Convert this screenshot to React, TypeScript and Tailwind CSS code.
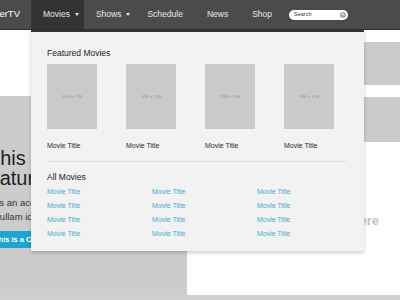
import React from "react";

const navTabs = [
  { label: "Movies", caret: true, active: true },
  { label: "Shows", caret: true, active: false },
  { label: "Schedule", caret: false, active: false },
  { label: "News", caret: false, active: false },
  { label: "Shop", caret: false, active: false },
];

function Caret() {
  return (
    <span className="ml-[5px] inline-block w-0 h-0 border-l-[2px] border-r-[2px] border-t-[3px] border-l-transparent border-r-transparent border-t-[#e6e6e6]"></span>
  );
}

function Poster() {
  return (
    <div className="w-[50px] flex flex-col">
      <div className="w-[50px] h-[65px] bg-[#cacaca] flex items-center justify-center">
        <span className="text-[5px] text-[#8a8a8a] font-['Liberation_Serif',serif]">
          100 x 130
        </span>
      </div>
      <p className="mt-[12px] text-[7px] leading-[10px] text-[#2a2a2a] whitespace-nowrap">
        Movie Title
      </p>
    </div>
  );
}

export default function App() {
  const links = Array.from({ length: 12 });

  return (
    <div className="w-[400px] h-[300px] overflow-hidden relative bg-white font-['Liberation_Sans',Arial,sans-serif]">
      <nav className="h-[30px] flex items-stretch bg-[#4b4b4b] border-b border-[#2e2e2e] text-[#e6e6e6] text-[8.5px]">
        <div className="w-[31px] shrink-0 flex items-center justify-end pr-[11px] whitespace-nowrap text-[9.5px] text-white">
          WatcherTV
        </div>
        {navTabs.map((t, i) => (
          <div
            key={i}
            className={
              "flex items-center pl-3 " +
              (t.caret ? "pr-[5px] " : "pr-3 ") +
              (t.active ? "bg-[#333333]" : "")
            }
          >
            <span className="whitespace-nowrap">{t.label}</span>
            {t.caret && <Caret />}
          </div>
        ))}
        <div className="flex items-center ml-[5px]">
          <div className="w-[59px] h-[10px] rounded-full bg-white flex items-center justify-between pl-[5px] pr-[2px]">
            <span className="text-[5.5px] text-[#333]">Search</span>
            <span className="w-[6px] h-[6px] rounded-full bg-[#a8a8a8] flex items-center justify-center text-white text-[5px] leading-none">
              ×
            </span>
          </div>
        </div>
      </nav>

      <div className="flex h-[265px]">
        <div className="w-[187px] shrink-0 pt-[66px] flex flex-col">
          <div className="flex-1 bg-[#cccccc] pt-[52px]">
            <div className="-ml-[12px] text-[20px] leading-[20px] text-[#1e1e1e] whitespace-nowrap">
              <div>This is a</div>
              <div className="-ml-[5px]">featured post</div>
            </div>
            <div className="mt-[8px] -ml-[7px] text-[9.5px] leading-[14px] text-[#333] whitespace-nowrap">
              <div>As an accomplished team, we</div>
              <div>Nullam id dolor id nibh</div>
            </div>
            <div className="mt-[7px] -ml-[14px] h-[17px] w-[120px] bg-[#1ea6d1] flex items-center pl-[8px]">
              <span className="text-[7.5px] font-bold text-white whitespace-nowrap">
                This is a Call to Action
              </span>
            </div>
          </div>
        </div>
        <div className="flex-1 min-w-0 flex flex-col">
          <div className="pl-[176px] pt-[12px]">
            <div className="w-[60px] h-[43px] bg-[#cbcbcb]"></div>
            <div className="mt-[12px] w-[60px] h-[45px] bg-[#cbcbcb]"></div>
          </div>
          <div className="mt-[71px] pr-[21px] flex justify-end text-[13px] leading-[16px] font-semibold text-[#c4c4c4] whitespace-nowrap">
            Sidebar text goes here
          </div>
        </div>
      </div>
      <div className="h-[5px] bg-[#cfcfcf]"></div>

      <div className="absolute left-[31px] top-[30px] w-[333px] h-[221px] bg-[#f2f2f2] border-t-2 border-[#333333] shadow-[0_2px_4px_rgba(0,0,0,0.2)] pl-4 pr-[18px] pt-[15px]">
        <h3 className="text-[8.5px] leading-[12px] text-[#222]">Featured Movies</h3>
        <div className="mt-[5px] flex gap-[29px]">
          <Poster />
          <Poster />
          <Poster />
          <Poster />
        </div>
        <div className="mt-[10px] h-px bg-[#dedede]"></div>
        <h3 className="mt-[9px] text-[8.5px] leading-[12px] text-[#222]">All Movies</h3>
        <div className="mt-[2px] grid grid-cols-[repeat(3,105px)]">
          {links.map((_, i) => (
            <a
              key={i}
              className="text-[7px] leading-[14px] text-[#47a9cc] whitespace-nowrap"
            >
              Movie Title
            </a>
          ))}
        </div>
      </div>
    </div>
  );
}
